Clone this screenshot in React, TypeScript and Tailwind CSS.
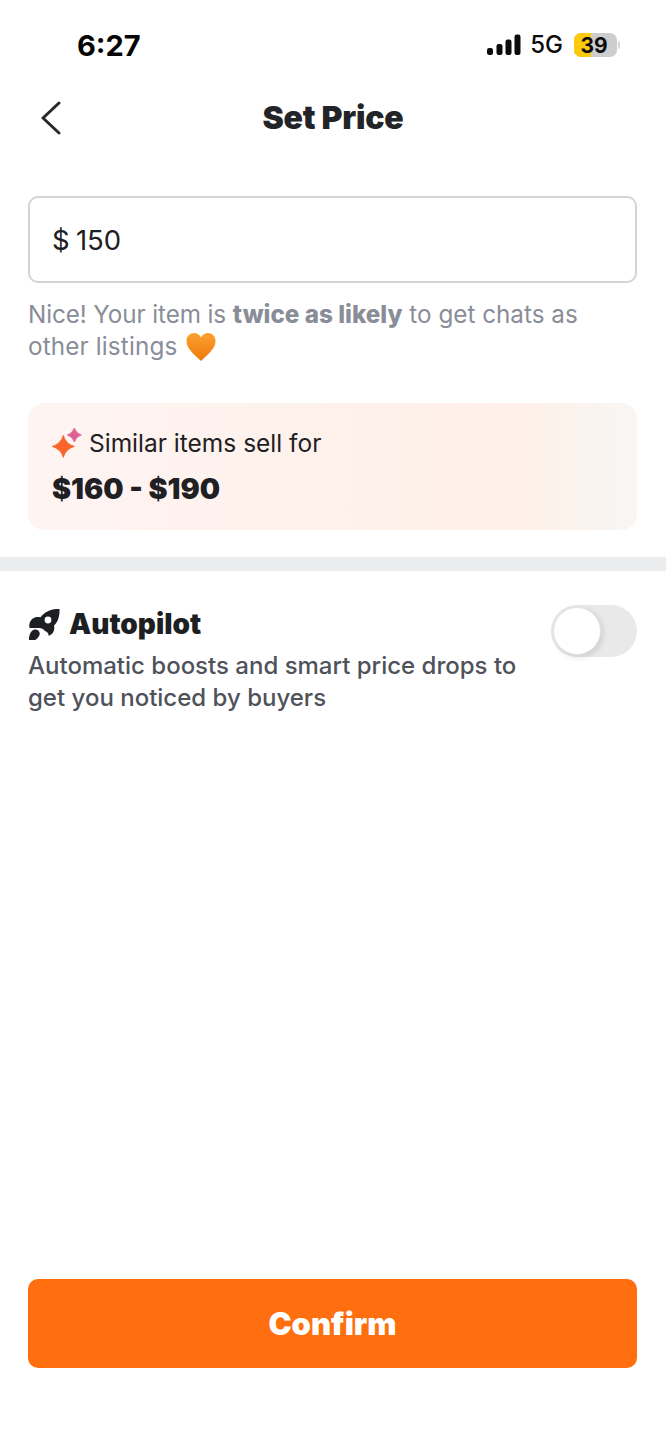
const inter = "font-['Inter','Liberation_Sans',sans-serif]";

function Signal() {
  return (
    <svg width="34" height="22" viewBox="0 0 34 22" className="block">
      <rect x="0" y="14" width="6" height="7" rx="2.2" fill="#0b0b0b" />
      <rect x="9.5" y="10" width="6" height="11" rx="2.2" fill="#0b0b0b" />
      <rect x="18.5" y="5.5" width="6" height="15.5" rx="2.2" fill="#0b0b0b" />
      <rect x="27.5" y="0.5" width="6" height="20.5" rx="2.2" fill="#0b0b0b" />
    </svg>
  );
}

function Sparkle() {
  return (
    <svg width="31" height="31" viewBox="6 4 31 31" className="block shrink-0">
      <path d="M17.3 11.4 Q19.8 19.9 28.3 22.4 Q19.8 24.9 17.3 33.4 Q14.8 24.9 6.3 22.4 Q14.8 19.9 17.3 11.4Z" fill="#f9652a" stroke="#f9652a" strokeWidth="0.8" strokeLinejoin="round" />
      <path d="M28.3 4 Q30 9.3 35.3 11 Q30 12.7 28.3 18 Q26.6 12.7 21.3 11 Q26.6 9.3 28.3 4Z" fill="#dd5f94" stroke="#dd5f94" strokeWidth="0.8" strokeLinejoin="round" />
    </svg>
  );
}

function Heart() {
  return (
    <svg width="30" height="30" viewBox="0 0 30 30" className="ml-[2px] inline-block align-[-7px]">
      <defs>
        <linearGradient id="h" x1="0" y1="0" x2="0" y2="1">
          <stop offset="0" stopColor="#fca130" />
          <stop offset="1" stopColor="#ee7a0a" />
        </linearGradient>
      </defs>
      <path d="M15 29 C9 23 0.5 17 0.5 9 C0.5 4 4 1 8 1 C11 1 13.5 2.5 15 5.5 C16.5 2.5 19 1 22 1 C26 1 29.5 4 29.5 9 C29.5 17 21 23 15 29Z" fill="url(#h)" />
    </svg>
  );
}

function Rocket() {
  return (
    <svg width="31" height="31" viewBox="5 5 31 31" className="ml-[1px] mr-[-1px] block shrink-0">
      <path
        fillRule="evenodd"
        fill="#1d1f22"
        d="M35.5 5 C35.8 12 34 18 30 21.5 C31 26 29.5 30 24.5 32 C25 29.5 23.5 28 21 27 C19.5 25 17.5 24 15 24 L5.5 24 C4.5 19 7 14 12.5 13 C13.5 12.8 15 13 16.5 13.2 C21 7.5 28 4.5 35.5 5Z M24 12.6 A3.4 3.4 0 1 0 24 19.4 A3.4 3.4 0 1 0 24 12.6Z"
      />
      <path fill="#1d1f22" d="M10.5 25.5 C14 25 16.5 27.5 15.5 31 C14 35 10 37.5 5 38 C4.5 32 6.5 26.5 10.5 25.5Z" />
    </svg>
  );
}

export default function App() {
  return (
    <div className={`${inter} relative flex h-[1440px] w-full flex-col bg-white text-[#1f2023]`}>
      {/* Status bar */}
      <div className="flex h-[88px] items-center justify-between pl-[77px] pr-[46px] pt-[2px]">
        <span className="text-[29px] font-bold leading-none text-[#050505]">6:27</span>
        <div className="flex items-center">
          <Signal />
          <span className="ml-[9px] text-[24px] font-medium leading-none text-[#0b0b0b]">5G</span>
          <div className="relative ml-[11px] flex h-[24px] w-[43px] items-center justify-center overflow-hidden rounded-[7px] bg-[#cdcdcd]">
            <div className="absolute inset-y-0 left-0 w-[17px] bg-[#fdc90c]" />
            <span className="relative -ml-[3px] text-[21px] font-bold leading-none text-[#0b0b0b]">39</span>
          </div>
          <div className="ml-[1px] h-[8px] w-[2px] rounded-r-full bg-[#d5d5d5]" />
        </div>
      </div>

      {/* Nav */}
      <div className="relative flex h-[58px] items-center justify-center pt-[1px]">
        <svg width="22" height="34" viewBox="0 0 22 34" fill="none" className="absolute left-[40px] top-[13px]">
          <path d="M19 2 L3 17 L19 32" stroke="#27282b" strokeWidth="3" strokeLinecap="round" strokeLinejoin="round" />
        </svg>
        <h1 className="text-[32px] font-black leading-none tracking-[-0.2px] text-[#232427]">Set Price</h1>
      </div>

      {/* Input */}
      <div className="mt-[50px] pl-[28px] pr-[29px]">
        <div className="flex h-[87px] items-center rounded-[10px] border-2 border-[#d3d4d8] pl-[22px] pt-[3px] text-[27.5px] leading-none text-[#1f2023] [word-spacing:-1.5px]">
          $ 150
        </div>
        <p className="mt-[16px] text-[24.25px] leading-[32px] text-[#898d97]">
          <span className="tracking-[-0.1px]">Nice! Your item is</span> <b className="font-extrabold">twice as likely</b> to get chats as <span className="tracking-[0.15px]">other listings</span> <Heart />
        </p>

        {/* Price card */}
        <div className="mt-[40px] flex h-[127px] flex-col rounded-[16px] bg-gradient-to-r from-[#fef4f2] via-[#fef0e8] via-80% to-[#f8f6f4] pl-[24px] pt-[24px]">
          <div className="flex items-center gap-[6px]">
            <Sparkle />
            <span className="text-[24.5px] leading-[32px] text-[#1f2023]">Similar items sell for</span>
          </div>
          <div className="mt-[13px] text-[28.6px] font-black leading-[34px] text-[#1f2023]">$160 - $190</div>
        </div>
      </div>

      {/* Divider */}
      <div className="mt-[27px] h-[14px] bg-[#ebecee]" />

      {/* Autopilot */}
      <div className="flex justify-between pl-[28px] pr-[29px] pt-[34px]">
        <div>
          <div className="flex items-center gap-[10px]">
            <Rocket />
            <span className="text-[28px] font-black leading-[38px] text-[#1d1f22]">Autopilot</span>
          </div>
          <p className="mt-[7px] w-[510px] text-[24px] font-medium leading-[32px] text-[#4f525b]">
            Automatic boosts and smart price drops to get you noticed by buyers
          </p>
        </div>
        <div className="flex h-[52px] w-[86px] shrink-0 items-center rounded-full bg-[#e9e9ea] pl-[2px]">
          <div className="h-[48px] w-[48px] rounded-full border border-[#e3e3e3] bg-white shadow-[2px_2px_6px_rgba(0,0,0,0.12)]" />
        </div>
      </div>

      {/* Confirm */}
      <div className="mt-auto pb-[72px] pl-[28px] pr-[29px]">
        <button className="flex h-[89px] w-full items-center justify-center rounded-[10px] bg-[#ff6f0f] text-[31px] font-black leading-none text-white">
          Confirm
        </button>
      </div>
    </div>
  );
}
